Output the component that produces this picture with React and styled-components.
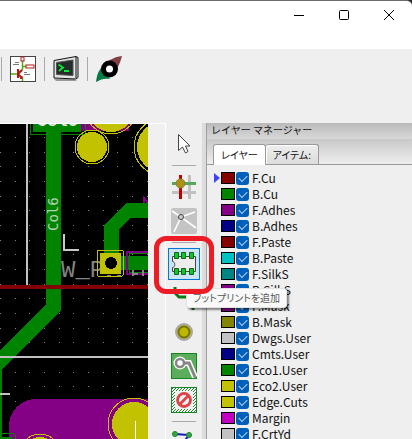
import React from "react";
import styled, { createGlobalStyle, css } from "styled-components";

const GlobalStyle = createGlobalStyle`
  * { box-sizing: border-box; }
  body {
    margin: 0;
    background: #2b2b2b;
    font-family: "Noto Sans CJK JP", "Noto Sans", sans-serif;
    color: #111;
  }
  button { border: 0; padding: 0; background: none; font: inherit; color: inherit; }
  svg { display: block; }
`;

const Window = styled.div`
  display: flex;
  flex-direction: column;
  height: 100vh;
  overflow: hidden;
  background: #efefef;
  border-top: 1px solid #6c6a6c;
  border-top-right-radius: 6px;
`;

const TitleBar = styled.header`
  display: flex;
  justify-content: flex-end;
  align-items: flex-start;
  flex: 0 0 48px;
  padding-right: 1px;
  background: #fff;
`;

const CaptionButton = styled.button`
  display: grid;
  place-items: center;
  width: 45px;
  height: 28px;
`;

const TopToolbar = styled.nav`
  display: flex;
  align-items: flex-start;
  gap: 8px;
  flex: 0 0 74px;
  padding: 7px 1px;
`;

const TopButton = styled.button`
  width: 26px;
  height: 26px;
`;

const TopDivider = styled.span`
  width: 1px;
  height: 24px;
  margin-top: 1px;
  background: #aaa;
`;

const Workspace = styled.main`
  display: flex;
  flex: 1;
  min-height: 0;
`;

const CanvasFrame = styled.section`
  display: flex;
  flex: 1;
  min-width: 0;
  border-top: 1px solid #fff;
  border-right: 1px solid #fff;
`;

const Board = styled.svg`
  flex: 1;
  min-width: 0;
  height: 100%;
  background: #000;
`;

const ScrollTrack = styled.div`
  flex: 0 0 17px;
  background: #f0f0f0;
`;

const SideToolbar = styled.nav`
  display: flex;
  flex-direction: column;
  align-items: center;
  gap: 2px;
  flex: 0 0 36px;
  padding-top: 5px;
`;

const ToolSlot = styled.div`
  position: relative;
  flex: 0 0 32px;
`;

const ToolButton = styled.button`
  display: grid;
  place-items: center;
  width: 32px;
  height: 32px;
  ${(p) =>
    p.$active &&
    css`
      background: #cce4f7;
      border: 1px solid #0078d4;
    `}
`;

const ToolDivider = styled.hr`
  flex: 0 0 1px;
  width: 24px;
  margin: 3px 0;
  border: 0;
  background: #aaa;
`;

const Highlight = styled.span`
  position: absolute;
  z-index: 3;
  left: -14px;
  top: -12px;
  width: 60px;
  height: 58px;
  border: 5px solid #ed1c24;
  border-radius: 12px;
  pointer-events: none;
`;

const Tooltip = styled.span`
  position: absolute;
  z-index: 2;
  left: 18px;
  top: 40px;
  height: 20px;
  padding: 0 6px;
  border: 1px solid #e2e2e2;
  border-radius: 3px;
  background: #f9f9f9;
  box-shadow: 2px 2px 2px rgba(0, 0, 0, 0.45);
  color: #575757;
  font-size: 10px;
  line-height: 18px;
  font-feature-settings: "palt";
  white-space: nowrap;
`;

const Sash = styled.div`
  flex: 0 0 4px;
  background: #dcdcdc;
`;

const LayerPanel = styled.aside`
  display: flex;
  flex-direction: column;
  flex: 0 0 206px;
  border-left: 1px solid #a0a0a0;
`;

const PanelTitle = styled.h2`
  flex: 0 0 16px;
  margin: 0;
  padding-left: 4px;
  background: linear-gradient(#bababa, #d8d8d8);
  font-size: 10px;
  font-weight: 400;
  line-height: 13px;
`;

const TabList = styled.div`
  display: flex;
  align-items: flex-end;
  flex: 0 0 26px;
  padding-left: 6px;
  border-bottom: 1px solid #999;
  background: linear-gradient(#c8c8c8, #eee);
`;

const Tab = styled.button`
  height: ${(p) => (p.$selected ? 21 : 20)}px;
  margin-bottom: ${(p) => (p.$selected ? -1 : 0)}px;
  padding: 0 7px;
  border: 1px solid #999;
  border-bottom: 0;
  border-left-width: ${(p) => (p.$selected ? 1 : 0)}px;
  border-radius: 3px 3px 0 0;
  background: ${(p) => (p.$selected ? "#fff" : "linear-gradient(#eee, #dcdcdc)")};
  box-shadow: inset 1px 1px 0 #fff;
  font-size: 10px;
  line-height: 18px;
  font-feature-settings: "palt";
`;

const LayerList = styled.ul`
  flex: 1;
  min-height: 0;
  margin: 0;
  padding: 5px 0 0 7px;
  overflow: hidden;
  list-style: none;
`;

const LayerRow = styled.li`
  display: flex;
  align-items: center;
  gap: 1px;
  height: 16px;
`;

const Marker = styled.span`
  width: 6px;
  height: 10px;
  background: ${(p) => (p.$current ? "#4040ff" : "transparent")};
  clip-path: polygon(0 0, 100% 50%, 0 100%);
`;

const Swatch = styled.button`
  width: 14px;
  height: 12px;
  border: 1px solid #000;
  background: ${(p) => p.$color};
`;

const Check = styled.input`
  appearance: none;
  display: grid;
  place-items: center;
  width: 13px;
  height: 13px;
  margin: 0;
  border-radius: 3px;
  background: #005fb8;
  &:checked::after {
    content: "";
    width: 7px;
    height: 4px;
    margin-bottom: 2px;
    border: solid #b9d6f0;
    border-width: 0 0 1px 1px;
    transform: rotate(-45deg);
  }
`;

const LayerName = styled.label`
  padding-left: 2px;
  font-size: 12px;
  line-height: 16px;
`;

const layers = [
  ["F.Cu", "#840000"],
  ["B.Cu", "#008400"],
  ["F.Adhes", "#840084"],
  ["B.Adhes", "#000084"],
  ["F.Paste", "#840000"],
  ["B.Paste", "#00c2c2"],
  ["F.SilkS", "#008484"],
  ["B.SilkS", "#840084"],
  ["F.Mask", "#840084"],
  ["B.Mask", "#848400"],
  ["Dwgs.User", "#c2c2c2"],
  ["Cmts.User", "#000084"],
  ["Eco1.User", "#008400"],
  ["Eco2.User", "#c2c200"],
  ["Edge.Cuts", "#c2c200"],
  ["Margin", "#c200c2"],
  ["F.CrtYd", "#c2c2c2"],
];

const gridDots = [];
for (let row = 0; row < 21; row++) {
  for (let col = 0; col < 11; col++) {
    gridDots.push([Math.round((col * 44) / 3), 137 + Math.round((row * 44) / 3)]);
  }
}

const BoardView = () => (
  <Board viewBox="0 124 148 315" preserveAspectRatio="xMidYMin slice" shapeRendering="crispEdges" role="img" aria-label="PCB">
    {gridDots.map(([x, y]) => (
      <rect key={`${x}-${y}`} x={x} y={y} width="1" height="1" fill="#848484" />
    ))}
    <path d="M26 124h2v161h-2z" fill="#c2c2c2" />
    <path d="M81 124h49l-1 7H81z" fill="#840084" />
    <circle cx="111" cy="108" r="24" fill="#c2c200" />
    <circle cx="111" cy="108" r="26" fill="none" stroke="#c2c200" />
    <path d="M33 124h48v8H33z" fill="#008400" />
    <path d="M30.500 120v14h55v-14" fill="none" stroke="#008400" />
    <text x="37" y="126" fill="#e6e6e6" fontFamily="Liberation Mono, monospace" fontSize="17" fontWeight="700">Col6</text>
    <path d="M46 127h15v183L2 369v70h-2v-89l46-46z" fill="#008400" />
    <text transform="translate(58 231) rotate(-90)" fill="#b5d3b5" fontFamily="DejaVu Sans Mono, monospace" fontSize="14">Col6</text>
    <circle cx="92" cy="147" r="15" fill="#c2c200" />
    <circle cx="92" cy="147" r="17" fill="none" stroke="#c2c200" />
    <circle cx="162" cy="147" r="25" fill="#c2c200" />
    <circle cx="162" cy="147" r="28" fill="none" stroke="#c2c200" />
    <path d="M144 203v-5l4 5" fill="none" stroke="#840084" strokeWidth="2" />
    <path d="M148 203h-22l-22 22v31h15v-27l12-11h17z" fill="#008400" />
    <path d="M64 234v16h15" fill="none" stroke="#c8c8c8" strokeWidth="2" />
    <text x="61" y="277" fill="#848484" fontFamily="Liberation Mono, monospace" fontSize="24">W_P</text>
    <path d="M121 256h27v14h-27z" fill="#008400" />
    <path d="M148 252h-21v22h21" fill="none" stroke="#840084" strokeWidth="2" />
    <path d="M148 253h-19v19h19" fill="none" stroke="#008400" />
    <path d="M107 276h4M117 276h4M133 270v6M143 270v6M134 274h4" fill="none" stroke="#848484" strokeWidth="2" />
    <path d="M100 253h21v21h-21z" fill="#c2c200" />
    <rect x="97" y="250" width="26" height="26" rx="1" fill="none" stroke="#c2c200" />
    <circle cx="111" cy="263" r="6" fill="#000" />
    <path d="M0 285h148v4H0z" fill="#840000" />
    <path d="M0 356h148v2H0zM0 393h10v2H0z" fill="#c2c2c2" />
    <path d="M148 399H36a27 27 0 0 0-27 27v13h139z" fill="#840084" />
    <circle cx="134" cy="424" r="26" fill="#840084" stroke="#c2c200" />
    <circle cx="134" cy="424" r="22" fill="#c2c200" />
    <path d="M135 421h1v18h-1z" fill="#fff" />
    <circle cx="40" cy="454" r="20" fill="none" stroke="#c2c200" />
    <circle cx="40" cy="454" r="17" fill="#c2c200" />
    <path d="M0 433h13l2 2v4" fill="none" stroke="#008400" />
    <path d="M0 437h12v2H0z" fill="#008400" />
  </Board>
);

const SchematicIcon = () => (
  <svg width="26" height="26" viewBox="0 0 26 26">
    <rect x="0.500" y="0.500" width="25" height="25" fill="#fff" stroke="#444" />
    <path d="M12.500 5v8.500L9 16M13 10.500h3M1 18h6M10 20l2.500 2v3" fill="none" stroke="#4cae10" strokeWidth="1.500" />
    <rect x="11" y="1" width="3" height="4" fill="#fff" stroke="#b31919" />
    <rect x="16" y="9" width="8" height="3" fill="#fff" stroke="#b31919" />
    <path d="M8 13v9M8 18l4-4M8 18l4 4" fill="none" stroke="#b31919" strokeWidth="2" />
    <path d="M12.500 20v3h-3z" fill="#b31919" />
    <path d="M5 6.500h4M3 8.500h6M14 16.500h3M14 18.500h6" stroke="#555" strokeWidth="0.800" />
  </svg>
);

const TerminalIcon = () => (
  <svg width="26" height="26" viewBox="0 0 26 26">
    <path d="M1 23h20l3 2H3z" fill="#999" />
    <path d="M1 4.500L23 .500l2 1v20l-2 1.500L1 22z" fill="#e2e2e2" stroke="#111" />
    <path d="M23 1v21" stroke="#111" />
    <path d="M3.500 6.500L20 4v15.500l-16.500-1z" fill="#252b2b" stroke="#555" />
    <path d="M5.500 8.500l4.500 3-4 3.500M11 15h5" fill="none" stroke="#00ef36" strokeWidth="1.800" />
  </svg>
);

const PadIcon = () => (
  <svg width="26" height="26" viewBox="0 0 26 26">
    <path d="M26 0C18 1 13 4 9 8l9 9c4-5 6-10 8-17z" fill="#803f42" />
    <path d="M0 26c1-7 2-10 5-14l9 11C9 22 5 23 0 26z" fill="#087a43" />
    <circle cx="13.500" cy="13" r="6" fill="#fff" stroke="#000" strokeWidth="5" />
  </svg>
);

const CursorIcon = () => (
  <svg width="26" height="26" viewBox="0 0 26 26">
    <path d="M7.500 3.500v16l4-3.500 3 6 2.500-1.500-2.500-5.500h4.500z" fill="#fff" stroke="#444" />
  </svg>
);

const RatsGridIcon = () => (
  <svg width="26" height="26" viewBox="0 0 26 26">
    <path d="M18.500 1v24M1 18.500h24" stroke="#c0c0c0" strokeWidth="3" />
    <path d="M9.500 1v24" stroke="#c00000" strokeWidth="3" />
    <path d="M1 9.500h24" stroke="#55a860" strokeWidth="3" />
    <circle cx="9.500" cy="9.500" r="4.500" fill="#ad9218" stroke="#858030" />
  </svg>
);

const RatsnestIcon = () => (
  <svg width="26" height="26" viewBox="0 0 26 26">
    <rect width="26" height="26" rx="2" fill="#c4c4c4" />
    <path d="M10 9L1 3M10 9l14-5M10 9l15 11M10 9L3 24" stroke="#fff" strokeWidth="1.600" />
    <circle cx="10" cy="9" r="2.500" fill="#ccc" stroke="#444" />
  </svg>
);

const FootprintIcon = () => (
  <svg width="26" height="26" viewBox="0 0 26 26">
    <path d="M1.500 5.500h23v15h-23v-4c3 0 3-6 0-6z" fill="#ededed" stroke="#444" />
    <path d="M4 2h4v6H4zM11 2h4v6h-4zM19 2h4v6h-4zM4 18h4v6H4zM11 18h4v6h-4zM19 18h4v6h-4z" transform="translate(-.5 -.5)" fill="#00d020" stroke="#1b5c20" />
  </svg>
);

const TrackIcon = () => (
  <svg width="26" height="26" viewBox="0 0 26 26">
    <path d="M4 2v6l4 4h9l5 5v8" fill="none" stroke="#0b7a17" strokeWidth="3" />
  </svg>
);

const ViaIcon = () => (
  <svg width="26" height="26" viewBox="0 0 26 26">
    <circle cx="13" cy="13" r="8" fill="#bcb900" stroke="#a8a8a8" strokeWidth="2" />
    <circle cx="13" cy="13" r="5.500" fill="#bcb900" stroke="#777118" strokeWidth="2" />
  </svg>
);

const ZoneIcon = () => (
  <svg width="26" height="26" viewBox="0 0 26 26">
    <rect x="0.500" y="0.500" width="25" height="25" fill="#5bad5b" stroke="#168622" />
    <path d="M9 10h9l6 14" fill="none" stroke="#fff" strokeWidth="6" />
    <circle cx="9" cy="10" r="6.500" fill="#fff" />
    <path d="M9 10h9l6 14" fill="none" stroke="#858585" strokeWidth="3" />
    <circle cx="9" cy="10" r="4" fill="#fff" stroke="#858585" strokeWidth="2.500" />
  </svg>
);

const KeepoutIcon = () => (
  <svg width="26" height="26" viewBox="0 0 26 26">
    <defs>
      <pattern id="hatch" width="3" height="3" patternUnits="userSpaceOnUse">
        <path d="M-1 1l2-2M0 3l3-3M2 4l2-2" stroke="#168622" />
      </pattern>
    </defs>
    <rect x="0.500" y="0.500" width="25" height="25" fill="#fff" />
    <rect x="0.500" y="0.500" width="25" height="25" fill="url(#hatch)" stroke="#168622" />
    <rect x="4" y="4" width="18" height="18" fill="#f2f2f2" />
    <circle cx="13" cy="13" r="6.500" fill="none" stroke="#dc4446" strokeWidth="2.800" />
    <path d="M17.500 8.500l-9 9" stroke="#dc4446" strokeWidth="2.800" />
  </svg>
);

const PolylineIcon = () => (
  <svg width="26" height="26" viewBox="0 0 26 26">
    <path d="M4 4l14 1L6 21h15" fill="none" stroke="#1414c8" strokeWidth="2" />
    <circle cx="4" cy="4" r="2.500" fill="#2fae3c" stroke="#277a30" />
    <circle cx="18" cy="5" r="2.500" fill="#2fae3c" stroke="#277a30" />
  </svg>
);

const tools = [
  ["選択", CursorIcon],
  null,
  ["ネットをハイライト", RatsGridIcon],
  ["ローカルラッツネスト", RatsnestIcon],
  null,
  ["フットプリントを追加", FootprintIcon, true],
  ["配線", TrackIcon],
  ["ビア", ViaIcon],
  ["ゾーン", ZoneIcon],
  ["キープアウト", KeepoutIcon],
  null,
  ["線を追加", PolylineIcon],
];

export default function App() {
  return (
    <>
      <GlobalStyle />
      <Window>
        <TitleBar>
          <CaptionButton aria-label="最小化">
            <svg width="10" height="10"><path d="M0 5.500h10" stroke="#000" /></svg>
          </CaptionButton>
          <CaptionButton aria-label="最大化">
            <svg width="10" height="10"><rect x="0.500" y="0.500" width="9" height="9" rx="1" fill="none" stroke="#000" /></svg>
          </CaptionButton>
          <CaptionButton aria-label="閉じる">
            <svg width="10" height="10"><path d="M0 0l10 10M10 0L0 10" stroke="#000" /></svg>
          </CaptionButton>
        </TitleBar>
        <TopToolbar>
          <TopDivider />
          <TopButton aria-label="回路図"><SchematicIcon /></TopButton>
          <TopDivider />
          <TopButton aria-label="コンソール"><TerminalIcon /></TopButton>
          <TopDivider />
          <TopButton aria-label="パッド"><PadIcon /></TopButton>
        </TopToolbar>
        <Workspace>
          <CanvasFrame>
            <BoardView />
            <ScrollTrack />
          </CanvasFrame>
          <SideToolbar>
            {tools.map((tool, i) => {
              if (!tool) return <ToolDivider key={i} />;
              const [name, Icon, active] = tool;
              return (
                <ToolSlot key={name}>
                  <ToolButton $active={active} aria-label={name}><Icon /></ToolButton>
                  {active && <Tooltip role="tooltip">{name}</Tooltip>}
                  {active && <Highlight />}
                </ToolSlot>
              );
            })}
          </SideToolbar>
          <Sash />
          <LayerPanel>
            <PanelTitle>レイヤー マネージャー</PanelTitle>
            <TabList role="tablist">
              <Tab role="tab" aria-selected="true" $selected>レイヤー</Tab>
              <Tab role="tab" aria-selected="false">アイテム:</Tab>
            </TabList>
            <LayerList>
              {layers.map(([name, color], i) => (
                <LayerRow key={name}>
                  <Marker $current={i === 0} />
                  <Swatch $color={color} aria-label={`${name} の色`} />
                  <Check type="checkbox" id={name} defaultChecked />
                  <LayerName htmlFor={name}>{name}</LayerName>
                </LayerRow>
              ))}
            </LayerList>
          </LayerPanel>
        </Workspace>
      </Window>
    </>
  );
}
